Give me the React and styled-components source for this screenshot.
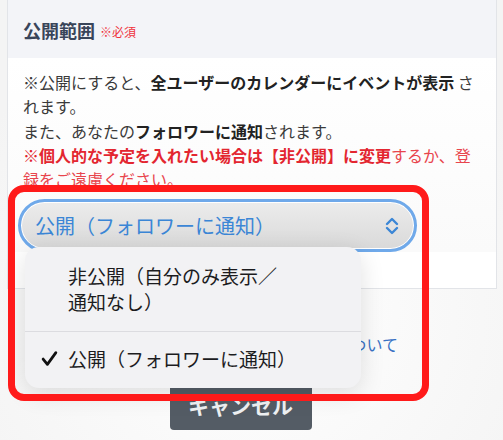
import styled, { createGlobalStyle } from 'styled-components';

const GlobalStyle = createGlobalStyle`
	html, body {
		margin: 0;
		padding: 0;
		background: #f6f6f6;
	}
	body {
		font-family: 'Noto Sans CJK JP', 'Noto Sans', sans-serif;
		overflow: hidden;
	}
`;

const App = () => {
	return (
		<>
			<GlobalStyle />
			<Page>
				<Card>
					<CardHeader>
						<Title>公開範囲</Title>
						<Required>※必須</Required>
					</CardHeader>
					<CardBody>
						<Note>
							※公開にすると、<b>全ユーザーのカレンダーにイベントが表示</b> されます。
						</Note>
						<Note>
							また、あなたの<b>フォロワーに通知</b>されます。
						</Note>
						<Note $warn>
							<b>※個人的な予定を入れたい場合は【非公開】に変更</b>するか、登録をご遠慮ください。
						</Note>
						<Select>
							<span>公開（フォロワーに通知）</span>
							<svg width='16' height='20' viewBox='0 0 16 20' fill='none' stroke='#3b86d6' strokeWidth='2.4' strokeLinecap='round' strokeLinejoin='round'>
								<polyline points='3,8 8,3 13,8' />
								<polyline points='3,12 8,17 13,12' />
							</svg>
						</Select>
					</CardBody>
				</Card>
				<LinkRow>
					<a>イベントの公開範囲について</a>
				</LinkRow>
				<ButtonRow>
					<CancelButton>キャンセル</CancelButton>
				</ButtonRow>

				<Menu>
					<MenuItem>非公開（自分のみ表示／通知なし）</MenuItem>
					<MenuItem $checked>
						<Check viewBox='0 0 16 16' fill='none' stroke='#111' strokeWidth='2.6' strokeLinecap='round' strokeLinejoin='round'>
							<polyline points='2,8.5 6,13.5 14,2.5' />
						</Check>
						公開（フォロワーに通知）
					</MenuItem>
				</Menu>
				<Highlight />
			</Page>
		</>
	);
};

export default App;

const Page = styled.div`
	position: relative;
	width: 503px;
	height: 440px;
	overflow: hidden;
	background: radial-gradient(circle at 50% 70%, #ffffff 0%, #f4f4f4 80%);
`;

const Card = styled.div`
	margin: -2px 6px 0 7px;
	border: 1px solid #e2e4e8;
	background: #ffffff;
	height: 291px;
	box-sizing: border-box;
`;

const CardHeader = styled.div`
	height: 59px;
	background: #f3f4f8;
	display: flex;
	align-items: center;
	gap: 5px;
	padding: 2px 15px 0;
	box-sizing: border-box;
`;

const Title = styled.span`
	font-size: 18px;
	font-weight: 700;
	color: #39455a;
`;

const Required = styled.span`
	font-size: 12px;
	color: #f0323c;
	margin-top: 3px;
`;

const CardBody = styled.div`
	padding: 12px 15px 0;
	background: linear-gradient(180deg, #ffffff 0%, #fafafa 100%);
`;

const Note = styled.p`
	margin: 0;
	font-size: 16px;
	line-height: 24.3px;
	color: ${(p) => (p.$warn ? '#e8454d' : '#3a3a3a')};

	& b {
		font-weight: 700;
		color: ${(p) => (p.$warn ? '#e32630' : '#222')};
	}
`;

const Select = styled.div`
	margin: 8px 0 0 -5px;
	width: 399px;
	height: 53px;
	box-sizing: border-box;
	border: 3px solid #6fa9ea;
	border-radius: 27px;
	background: linear-gradient(180deg, #ececec 0%, #d9d9d9 100%);
	box-shadow: inset 0 0 0 1px #ffffff;
	display: flex;
	align-items: center;
	justify-content: space-between;
	padding: 0 14px 0 14px;
	font-size: 20px;
	color: #3b86d6;
`;

const LinkRow = styled.div`
	display: flex;
	justify-content: flex-end;
	padding: 43px 105px 0 0;
	font-size: 16px;
	line-height: 24px;

	& a {
		color: #3a72c4;
	}
`;

const ButtonRow = styled.div`
	display: flex;
	justify-content: center;
	padding: 24px 22px 0 0;
`;

const CancelButton = styled.button`
	width: 142px;
	height: 50px;
	border: none;
	border-radius: 4px;
	background: #545c65;
	color: #eef0f2;
	font-family: 'Noto Sans CJK JP', sans-serif;
	font-size: 21px;
	font-weight: 700;
	padding: 0;
`;

const Menu = styled.div`
	position: absolute;
	left: 25px;
	top: 247px;
	width: 336px;
	background: #f2f2f4;
	border-radius: 14px;
	box-shadow: 0 6px 24px rgba(0, 0, 0, 0.12);
	overflow: hidden;
`;

const MenuItem = styled.div`
	position: relative;
	padding: ${(p) => (p.$checked ? '14px 20px 16px 43px' : '16px 70px 16px 43px')};
	font-size: 19px;
	line-height: 26px;
	color: #1c1c1e;
	border-top: ${(p) => (p.$checked ? '1px solid #dcdce0' : 'none')};
`;

const Check = styled.svg`
	position: absolute;
	left: 16px;
	top: 18px;
	width: 17px;
	height: 17px;
`;

const Highlight = styled.div`
	position: absolute;
	left: 8px;
	top: 185px;
	width: 421px;
	height: 216px;
	box-sizing: border-box;
	border: 7px solid #ff1a1a;
	border-radius: 16px;
	pointer-events: none;
`;
